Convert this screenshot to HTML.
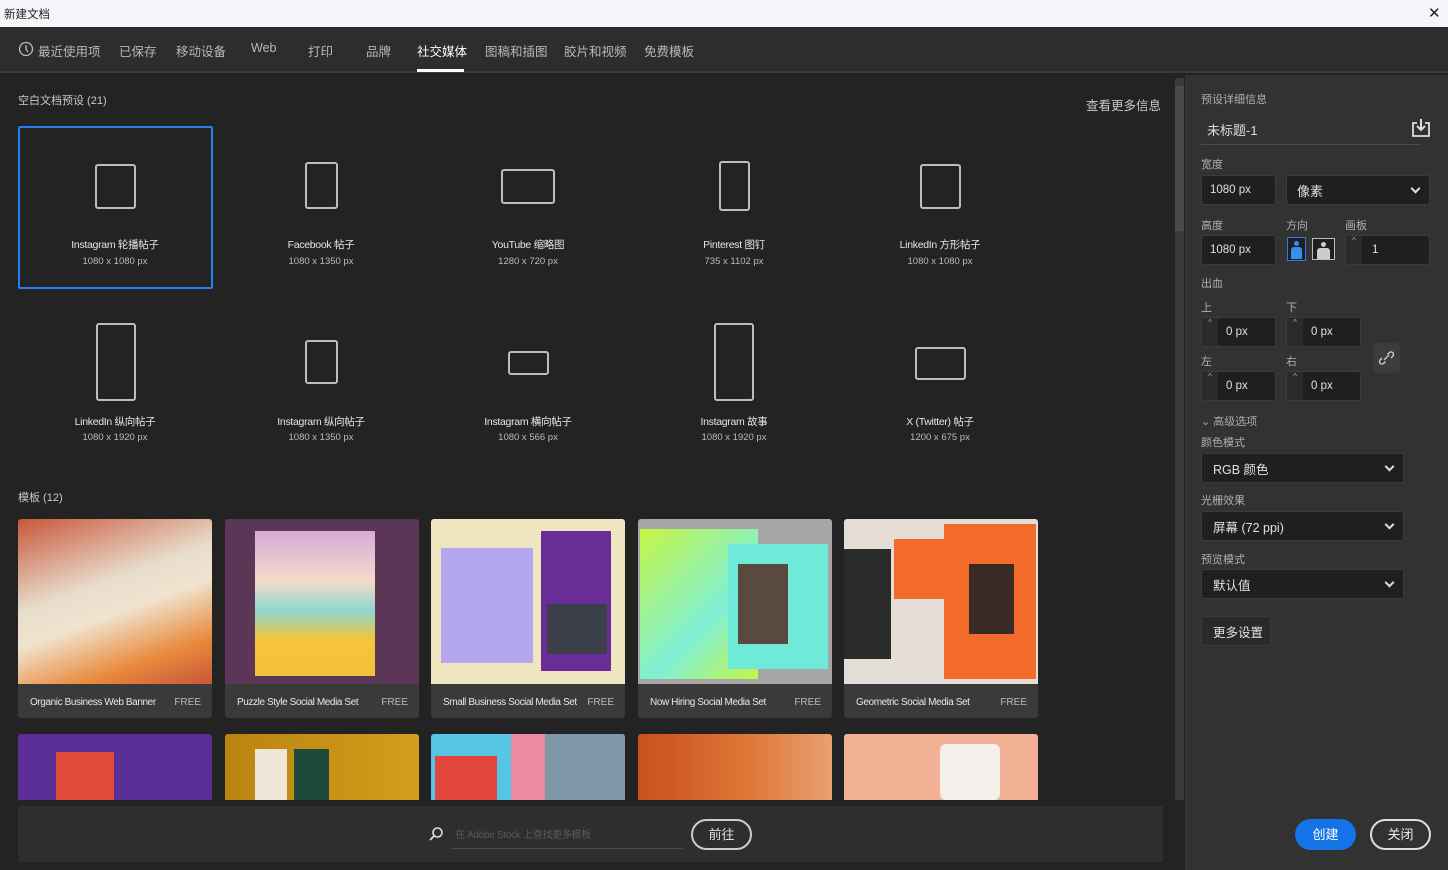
<!DOCTYPE html>
<html><head><meta charset="utf-8"><style>
*{box-sizing:border-box;margin:0;padding:0}
body{width:1448px;height:870px;overflow:hidden;background:#232323;font-family:"Liberation Sans","Noto Sans CJK SC",sans-serif;color:#ccc;position:relative}
.a{position:absolute}
.tb{left:0;top:0;width:1448px;height:27px;background:#f3f5f8;color:#222;font-size:11.5px}
.tabs{left:0;top:27px;width:1448px;height:46px;background:#2d2d2d;border-bottom:2px solid #3a3a3a}
.tab{position:absolute;top:14px;font-size:12.5px;color:#b8b8b8}
.lbl{font-size:11px;color:#c8c8c8}
.pi{position:absolute;border:2px solid #bdbdbd;border-radius:3px}
.pt{position:absolute;width:194px;text-align:center;font-size:10.5px;color:#e6e6e6;letter-spacing:-0.3px}
.ps{position:absolute;width:194px;text-align:center;font-size:9.5px;color:#bbb}
.card{position:absolute;width:194px;height:199px;border-radius:3px;overflow:hidden;background:#3a3a3a}
.card .img{height:165px}
.card .n{position:absolute;left:12px;top:178px;font-size:10px;color:#e8e8e8;letter-spacing:-0.4px}
.card .f{position:absolute;right:11px;top:178px;font-size:10px;color:#bbb}
.card2{position:absolute;width:194px;height:66px;top:734px;border-radius:3px 3px 0 0;overflow:hidden}
.rp{left:1185px;top:75px;width:263px;height:795px;background:#323232}
.rl{position:absolute;font-size:11px;color:#b0b0b0}
.in{position:absolute;background:#1f1f1f;border:1px solid #3c3c3c;border-radius:3px;font-size:12px;color:#e0e0e0;padding-left:8px;display:flex;align-items:center}
.sp{position:absolute;left:0;top:0;bottom:0;width:16px;background:#2a2a2a;font-size:8px;color:#aaa;text-align:center}
.chev{position:absolute;right:10px;top:50%;width:7px;height:7px;border-right:2px solid #ddd;border-bottom:2px solid #ddd;transform:translateY(-70%) rotate(45deg)}
</style></head><body>
<div class="a tb"><span class="a" style="left:4px;top:6px">新建文档</span><span class="a" style="left:1428px;top:4px;font-size:15px">✕</span></div>
<div class="a tabs">
<svg class="a" style="left:18px;top:14px" width="16" height="16" viewBox="0 0 16 16"><circle cx="8" cy="8" r="6.5" fill="none" stroke="#bbb" stroke-width="1.3"/><path d="M8 4v4l2 3" fill="none" stroke="#bbb" stroke-width="1.3"/></svg>
<span class="tab" style="left:38px">最近使用项</span><span class="tab" style="left:119px">已保存</span><span class="tab" style="left:176px">移动设备</span><span class="tab" style="left:251px">Web</span><span class="tab" style="left:308px">打印</span><span class="tab" style="left:366px">品牌</span><span class="tab" style="left:417px;color:#fff">社交媒体</span><span class="tab" style="left:485px">图稿和插图</span><span class="tab" style="left:564px">胶片和视频</span><span class="tab" style="left:644px">免费模板</span>
<div class="a" style="left:417px;top:42px;width:47px;height:3px;background:#fff"></div>
</div>
<div class="a lbl" style="left:18px;top:92px">空白文档预设 (21)</div>
<div class="a" style="left:1086px;top:95px;font-size:12.5px;color:#c8c8c8">查看更多信息</div>
<div class="a" style="left:18px;top:126px;width:195px;height:163px;border:2px solid #2680eb;border-radius:2px"></div>
<div class="pi" style="left:95px;top:164px;width:41px;height:45px"></div>
<div class="pi" style="left:305px;top:162px;width:33px;height:47px"></div>
<div class="pi" style="left:501px;top:169px;width:54px;height:35px"></div>
<div class="pi" style="left:719px;top:161px;width:31px;height:50px"></div>
<div class="pi" style="left:920px;top:164px;width:41px;height:45px"></div>
<div class="pi" style="left:96px;top:323px;width:40px;height:78px"></div>
<div class="pi" style="left:305px;top:340px;width:33px;height:44px"></div>
<div class="pi" style="left:508px;top:351px;width:41px;height:24px"></div>
<div class="pi" style="left:714px;top:323px;width:40px;height:78px"></div>
<div class="pi" style="left:915px;top:347px;width:51px;height:33px"></div>
<div class="pt" style="left:18px;top:237px">Instagram 轮播帖子</div><div class="ps" style="left:18px;top:256px">1080 x 1080 px</div>
<div class="pt" style="left:224px;top:237px">Facebook 帖子</div><div class="ps" style="left:224px;top:256px">1080 x 1350 px</div>
<div class="pt" style="left:431px;top:237px">YouTube 缩略图</div><div class="ps" style="left:431px;top:256px">1280 x 720 px</div>
<div class="pt" style="left:637px;top:237px">Pinterest 图钉</div><div class="ps" style="left:637px;top:256px">735 x 1102 px</div>
<div class="pt" style="left:843px;top:237px">LinkedIn 方形帖子</div><div class="ps" style="left:843px;top:256px">1080 x 1080 px</div>
<div class="pt" style="left:18px;top:414px">LinkedIn 纵向帖子</div><div class="ps" style="left:18px;top:432px">1080 x 1920 px</div>
<div class="pt" style="left:224px;top:414px">Instagram 纵向帖子</div><div class="ps" style="left:224px;top:432px">1080 x 1350 px</div>
<div class="pt" style="left:431px;top:414px">Instagram 横向帖子</div><div class="ps" style="left:431px;top:432px">1080 x 566 px</div>
<div class="pt" style="left:637px;top:414px">Instagram 故事</div><div class="ps" style="left:637px;top:432px">1080 x 1920 px</div>
<div class="pt" style="left:843px;top:414px">X (Twitter) 帖子</div><div class="ps" style="left:843px;top:432px">1200 x 675 px</div>
<div class="a lbl" style="left:18px;top:489px">模板 (12)</div>

<div class="card" style="left:18px;top:519px"><div class="img" style="background:linear-gradient(160deg,#c9563a 0%,#e8dccb 40%,#f0e4d0 55%,#e98a3c 80%,#c9563a 100%)"></div><span class="n">Organic Business Web Banner</span><span class="f">FREE</span></div>
<div class="card" style="left:225px;top:519px"><div class="img" style="background:#5b3656;position:relative"><div class="a" style="left:30px;top:12px;width:120px;height:145px;background:linear-gradient(180deg,#d9a9d6 0%,#f2dcc9 35%,#8fd6cf 55%,#f5c43a 75%,#f3c23a 100%)"></div></div><span class="n">Puzzle Style Social Media Set</span><span class="f">FREE</span></div>
<div class="card" style="left:431px;top:519px"><div class="img" style="background:#efe6c0;position:relative"><div class="a" style="left:110px;top:12px;width:70px;height:140px;background:#6a2c97"></div><div class="a" style="left:10px;top:29px;width:92px;height:115px;background:#b4a6f0"></div><div class="a" style="left:116px;top:85px;width:60px;height:50px;background:#3a3f4a"></div></div><span class="n">Small Business Social Media Set</span><span class="f">FREE</span></div>
<div class="card" style="left:638px;top:519px"><div class="img" style="background:#a6a6a6;position:relative"><div class="a" style="left:2px;top:10px;width:118px;height:150px;background:linear-gradient(135deg,#c6f545,#7ff0d6 60%,#c6f545)"></div><div class="a" style="left:90px;top:25px;width:100px;height:125px;background:#6fe9d8"></div><div class="a" style="left:100px;top:45px;width:50px;height:80px;background:#5a4a3e"></div></div><span class="n">Now Hiring Social Media Set</span><span class="f">FREE</span></div>
<div class="card" style="left:844px;top:519px"><div class="img" style="background:#e4ddd6;position:relative"><div class="a" style="left:0;top:30px;width:47px;height:110px;background:#2a2a2a"></div><div class="a" style="left:50px;top:20px;width:50px;height:60px;background:#f26b2a"></div><div class="a" style="left:100px;top:5px;width:92px;height:155px;background:#f26b2a"></div><div class="a" style="left:125px;top:45px;width:45px;height:70px;background:#3a2a25"></div></div><span class="n">Geometric Social Media Set</span><span class="f">FREE</span></div>

<div class="card2" style="left:18px;background:#5a2e94"><div class="a" style="left:38px;top:18px;width:58px;height:48px;background:#e04a3b"></div></div>
<div class="card2" style="left:225px;background:linear-gradient(90deg,#b98410,#d39e1a)"><div class="a" style="left:30px;top:15px;width:32px;height:51px;background:#efe6da"></div><div class="a" style="left:69px;top:15px;width:35px;height:51px;background:#1f4a3a"></div></div>
<div class="card2" style="left:431px;background:#55c6e6"><div class="a" style="left:4px;top:22px;width:62px;height:44px;background:#e2453c"></div><div class="a" style="left:80px;top:0;width:34px;height:66px;background:#ee8aa0"></div><div class="a" style="left:114px;top:0;width:80px;height:66px;background:#7f98a8"></div></div>
<div class="card2" style="left:638px;background:linear-gradient(90deg,#c9501c,#e07a3a 60%,#e9a070)"></div>
<div class="card2" style="left:844px;background:#f2b095"><div class="a" style="left:96px;top:10px;width:60px;height:56px;background:#f4f0ec;border-radius:6px"></div></div>

<div class="a" style="left:18px;top:806px;width:1145px;height:56px;background:#2e2e2e"></div>
<svg class="a" style="left:428px;top:826px" width="16" height="16" viewBox="0 0 16 16"><circle cx="9.5" cy="6.5" r="4.5" fill="none" stroke="#ddd" stroke-width="1.6"/><path d="M6.5 9.5L2 14" stroke="#ddd" stroke-width="1.8"/></svg>
<div class="a" style="left:455px;top:826px;font-size:10px;color:#5a5a5a;letter-spacing:-0.3px">在 Adobe Stock 上查找更多模板</div>
<div class="a" style="left:451px;top:848px;width:232px;height:1px;background:#4a4a4a"></div>
<div class="a" style="left:691px;top:819px;width:61px;height:31px;border:2px solid #ccc;border-radius:16px;color:#e0e0e0;font-size:13px;text-align:center;line-height:27px">前往</div>

<div class="a" style="left:1175px;top:78px;width:9px;height:722px;background:#3a3a3a;border-radius:2px"><div style="margin-top:8px;height:145px;background:#4a4a4a"></div></div>

<div class="a rp">
<div class="rl" style="left:16px;top:16px">预设详细信息</div>
<div class="a" style="left:22px;top:45px;font-size:13px;color:#ddd">未标题-1</div>
<div class="a" style="left:16px;top:69px;width:220px;height:1px;background:#4a4a4a"></div>
<svg class="a" style="left:226px;top:43px" width="20" height="20" viewBox="0 0 20 20"><path d="M6 5H2v13h16V5h-4" fill="none" stroke="#ddd" stroke-width="1.8"/><path d="M10 1v11M6 8l4 4 4-4" fill="none" stroke="#ddd" stroke-width="2"/></svg>
<div class="rl" style="left:16px;top:81px">宽度</div>
<div class="in" style="left:16px;top:100px;width:75px;height:30px;font-size:11.5px">1080 px</div>
<div class="in" style="left:101px;top:100px;width:144px;height:30px;font-size:13px;padding-left:10px">像素<span class="chev"></span></div>
<div class="rl" style="left:16px;top:142px">高度</div><div class="rl" style="left:101px;top:142px">方向</div><div class="rl" style="left:160px;top:142px">画板</div>
<div class="in" style="left:16px;top:160px;width:75px;height:30px;font-size:11.5px">1080 px</div>
<div class="a" style="left:102px;top:162px;width:19px;height:24px;border:1px solid #2680eb;background:#1f1f1f"><div class="a" style="left:6px;top:3px;width:5px;height:5px;border-radius:50%;background:#3a8cf0"></div><div class="a" style="left:3px;top:9px;width:11px;height:12px;background:#3a8cf0;border-radius:3px 3px 0 0"></div></div>
<div class="a" style="left:127px;top:163px;width:23px;height:22px;border:1px solid #bbb;background:#1f1f1f"><div class="a" style="left:8px;top:3px;width:5px;height:5px;border-radius:50%;background:#ccc"></div><div class="a" style="left:4px;top:9px;width:13px;height:11px;background:#ccc;border-radius:3px 3px 0 0"></div></div>
<div class="in" style="left:160px;top:160px;width:85px;height:30px;padding-left:26px;font-size:11.5px"><span class="sp">^</span>1</div>
<div class="rl" style="left:16px;top:200px">出血</div>
<div class="rl" style="left:16px;top:224px">上</div><div class="rl" style="left:101px;top:224px">下</div>
<div class="in" style="left:16px;top:242px;width:75px;height:30px;padding-left:24px;font-size:11.5px"><span class="sp">^</span>0 px</div>
<div class="in" style="left:101px;top:242px;width:75px;height:30px;padding-left:24px;font-size:11.5px"><span class="sp">^</span>0 px</div>
<div class="rl" style="left:16px;top:278px">左</div><div class="rl" style="left:101px;top:278px">右</div>
<div class="in" style="left:16px;top:296px;width:75px;height:30px;padding-left:24px;font-size:11.5px"><span class="sp">^</span>0 px</div>
<div class="in" style="left:101px;top:296px;width:75px;height:30px;padding-left:24px;font-size:11.5px"><span class="sp">^</span>0 px</div>
<div class="a" style="left:188px;top:268px;width:27px;height:30px;background:#3c3c3c;border-radius:4px"><svg width="27" height="30" viewBox="0 0 27 30"><path d="M11 17l5-5M9 15l-2 2a2.5 2.5 0 0 0 3.5 3.5l2-2M18 15l2-2a2.5 2.5 0 0 0-3.5-3.5l-2 2" fill="none" stroke="#ccc" stroke-width="1.4"/></svg></div>
<div class="rl" style="left:16px;top:338px;color:#aaa">⌄ 高级选项</div>
<div class="rl" style="left:16px;top:359px">颜色模式</div>
<div class="in" style="left:16px;top:378px;width:203px;height:30px;padding-left:11px;font-size:12.5px">RGB 颜色<span class="chev"></span></div>
<div class="rl" style="left:16px;top:417px">光栅效果</div>
<div class="in" style="left:16px;top:436px;width:203px;height:30px;padding-left:11px;font-size:12.5px">屏幕 (72 ppi)<span class="chev"></span></div>
<div class="rl" style="left:16px;top:476px">预览模式</div>
<div class="in" style="left:16px;top:494px;width:203px;height:30px;padding-left:11px;font-size:12.5px">默认值<span class="chev"></span></div>
<div class="in" style="left:16px;top:541px;width:70px;height:30px;padding-left:11px;font-size:12.5px;background:#2a2a2a">更多设置</div>
<div class="a" style="left:110px;top:744px;width:61px;height:31px;background:#1473e6;border-radius:16px;color:#fff;font-size:13px;text-align:center;line-height:31px">创建</div>
<div class="a" style="left:185px;top:744px;width:61px;height:31px;border:2px solid #ddd;border-radius:16px;color:#eee;font-size:13px;text-align:center;line-height:27px">关闭</div>
</div>
</body></html>
